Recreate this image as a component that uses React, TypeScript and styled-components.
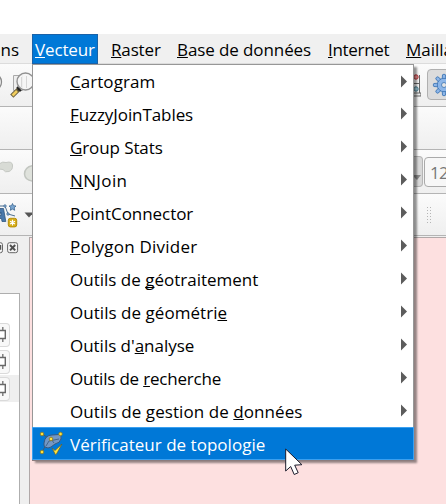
import React from "react";
import styled, { createGlobalStyle } from "styled-components";

const Global = createGlobalStyle`
  * { box-sizing: border-box; }
  body { margin: 0; background: #fff; overflow: hidden; font-family: "Open Sans", "Noto Sans", sans-serif; }
  svg { display: block; flex: none; }
`;

const Window = styled.div`
  position: relative;
  width: 446px;
  height: 504px;
  padding-top: 34px;
  display: flex;
  flex-direction: column;
  overflow: hidden;
  background: #fff;
`;

const MenuBar = styled.nav`
  display: flex;
  flex: none;
  height: 30px;
  background: #f0f0f0;
  border-bottom: 1px solid #dcdcdc;
`;

const MenuTitle = styled.div<{ $width: number; $pad?: number; $tracking?: number; $active?: boolean }>`
  flex: none;
  width: ${(p) => p.$width}px;
  height: 30px;
  padding-left: ${(p) => p.$pad ?? 3}px;
  font-size: 17px;
  line-height: 31px;
  letter-spacing: ${(p) => p.$tracking ?? 0}px;
  white-space: nowrap;
  color: ${(p) => (p.$active ? "#fff" : "#000")};
  background: ${(p) => (p.$active ? "#0078d7" : "transparent")};
  box-shadow: ${(p) => (p.$active ? "inset 0 0 0 1px #1a62a8" : "none")};
`;

const ScrolledTitle = styled(MenuTitle)`
  display: flex;
  justify-content: flex-end;
  padding: 0 13px 0 0;
`;

const Mnemonic = styled.span`
  text-decoration: underline 1px;
  text-underline-offset: 1px;
  text-decoration-skip-ink: none;
`;

const ToolBar = styled.div<{ $height: number }>`
  display: flex;
  justify-content: space-between;
  flex: none;
  height: ${(p) => p.$height}px;
  background: linear-gradient(#fbfbfb, #efefef);
  border-bottom: 1px solid #b4b4b4;
`;

const ToolGroup = styled.div<{ $width: number }>`
  display: flex;
  align-items: center;
  width: ${(p) => p.$width}px;
  overflow: hidden;
`;

const PressedButton = styled.div`
  flex: none;
  display: flex;
  align-items: center;
  width: 36px;
  height: 31px;
  margin: 0 0 1px 6px;
  padding-left: 4px;
  border: 1px solid #b0b0b0;
  border-radius: 4px;
  background: #dcdcdc;
`;

const ComboArrow = styled.div`
  flex: none;
  display: flex;
  align-items: center;
  width: 9px;
  height: 31px;
  margin-bottom: 1px;
  padding-top: 12px;
  border: 1px solid #b5b5b5;
  border-left: 0;
  border-radius: 0 4px 4px 0;
  background: #d8d8d8;
`;

const NumberField = styled.div`
  flex: none;
  width: 46px;
  height: 30px;
  margin-left: 1px;
  padding-left: 5px;
  border: 1px solid #aaa;
  border-radius: 4px;
  background: #f7f7f7;
  color: #777;
  font-size: 17px;
  letter-spacing: -0.6px;
  line-height: 30px;
`;

const Workspace = styled.div`
  display: flex;
  flex: 1;
  min-height: 0;
  background: #efefef;
  padding-top: 1px;
`;

const Dock = styled.aside`
  flex: none;
  width: 29px;
  display: flex;
  flex-direction: column;
`;

const DockHeader = styled.div`
  display: flex;
  align-items: center;
  height: 21px;
  margin-bottom: 35px;
`;

const LayerTree = styled.div`
  flex: 1;
  width: 20px;
  padding-top: 27px;
  border: 1px solid #aeaeae;
  border-width: 1px 1px 0 0;
  background: #fff;
`;

const LayerRow = styled.div<{ $selected?: boolean }>`
  display: flex;
  align-items: center;
  height: 27px;
  background: ${(p) => (p.$selected ? "#efefef" : "#fff")};
`;

const LayerButton = styled.div`
  display: flex;
  align-items: center;
  width: 10px;
  height: 24px;
  border: 1px solid #dadada;
  border-left: 0;
  border-radius: 0 4px 4px 0;
  background: #f8f8f8;
`;

const MapCanvas = styled.main`
  flex: 1;
  border: 1px solid #b0a8a8;
  border-width: 1px 0 0 1px;
  background: #fde0e0;
`;

const Popup = styled.div`
  position: absolute;
  left: 32px;
  top: 64px;
  width: 382px;
  height: 396px;
  background: #fff;
  box-shadow: 0 1px 0 #8b7c7e, 3px 3px 2px rgba(0, 0, 0, 0.42);
`;

const Entry = styled.div<{ $tracking?: number; $active?: boolean }>`
  display: flex;
  align-items: center;
  height: 33px;
  padding: 0 6px 0 ${(p) => (p.$active ? 6 : 37)}px;
  border: solid ${(p) => (p.$active ? "#3ba0f0" : "#979797")};
  border-width: ${(p) => (p.$active ? "1px" : "0 1px")};
  font-size: 17px;
  letter-spacing: ${(p) => p.$tracking ?? 0}px;
  white-space: pre;
  color: ${(p) => (p.$active ? "#fff" : "#000")};
  background: ${(p) => (p.$active ? "#0078d7" : "#fff")};
  &:first-child { border-top: 1px solid #979797; }
`;

const Label = styled.span`
  flex: 1;
  line-height: 24px;
  padding-top: 2px;
`;

const Pointer = styled.svg`
  position: absolute;
  left: 285px;
  top: 448px;
`;

const entries: [string, string, string, number][] = [
  ["", "C", "artogram", 0.05],
  ["", "F", "uzzyJoinTables", -0.08],
  ["", "G", "roup Stats", -0.1],
  ["", "N", "NJoin", 0.38],
  ["", "P", "ointConnector", -0.05],
  ["", "P", "olygon Divider", 0.24],
  ["Outils de ", "g", "éotraitement", 0],
  ["Outils de géométri", "e", "", 0.04],
  ["Outils d'", "a", "nalyse", -0.03],
  ["Outils de ", "r", "echerche", -0.2],
  ["Outils de gestion de ", "d", "onnées", 0.07],
];

const ZoomLayerIcon = () => (
  <svg width="32" height="42" viewBox="0 0 32 42">
    <circle cx="-7" cy="18" r="8.5" fill="#f4f4f4" stroke="#888" strokeWidth="1.3" />
    <path d="M13.5 11.5h9v15h-9z" fill="#eee" stroke="#aaa" />
    <path d="M11.8 32.2l7.4-7.4" stroke="#6b6040" strokeWidth="4.6" />
    <path d="M12.5 31.5l4.5-4.5" stroke="#f1cd5d" strokeWidth="2.6" />
    <path d="M17 23l4 4M18 26l3-3" stroke="#222" strokeWidth="2" />
    <circle cx="25.5" cy="17.5" r="8.5" fill="#f5f5f5" fillOpacity=".9" stroke="#919191" strokeWidth="1.4" />
    <path d="M21.5 13v10M26.5 12v12" fill="none" stroke="#d6d6d6" />
  </svg>
);

const RulerIcon = () => (
  <svg width="7" height="42" viewBox="0 0 7 42">
    <path d="M5.5 11v20M0 19.5h6M0 31h6" stroke="#666" />
    <path d="M0 29h7v3H0" fill="#eee" stroke="#666" />
    <circle cx="2" cy="13" r="2.2" fill="#f19999" stroke="#bc3339" />
    <circle cx="2" cy="25" r="2.2" fill="#a8d2e0" stroke="#487d91" />
  </svg>
);

const GearIcon = () => (
  <svg width="24" height="24" viewBox="-12 -12 24 24">
    <g fill="#8db6e8" stroke="#3f77b5" strokeWidth=".9">
      {[0, 45, 90, 135, 180, 225, 270, 315].map((a) => (
        <path key={a} transform={`rotate(${a})`} d="M-1.8-6L-1.5-10.2Q0-11.4 1.5-10.2L1.8-6" />
      ))}
      <circle r="6.7" />
    </g>
    <circle r="6.1" fill="#8db6e8" />
    <circle r="2.5" fill="#e5e5e5" stroke="#5386be" />
  </svg>
);

const ShapesIcon = () => (
  <svg width="32" height="42" viewBox="0 0 32 42">
    <path d="M-1 13Q3 10 6 11.5Q12 10 12.5 14Q13 19 9 20.5Q5 22 3 18.5L-1 18" fill="#d8dbd5" stroke="#c5c8c3" />
    <path d="M34 14.5Q25 15 24.5 23Q25 30 34 30" fill="#dfe2dc" stroke="#c2c6c0" strokeWidth="1.5" />
  </svg>
);

const LabelIcon = () => (
  <svg width="32" height="42" viewBox="0 0 32 42">
    <path d="M-5 27.5L0 14.5H3.5L5.8 27.5H2L1.5 24.5H-1.5L-2.5 27.5zM-.6 21.5H1.2L.8 18z" fill="#4a78aa" stroke="#2f5780" strokeWidth=".8" />
    <path d="M-1 12H5L8 20L15 22" fill="none" stroke="#4d6f8f" />
    <g fill="#9fc1e2" stroke="#3a648f" strokeWidth=".8"><circle cx="5" cy="12" r="1.2" /><circle cx="8" cy="20" r="1.2" /></g>
    <path d="M12.5 9.5l1 2.2 2.5.3-1.8 1.8.5 2.5-2.2-1.2-2.2 1.2.5-2.5L9 12l2.5-.3z" fill="#7ba7d2" stroke="#3a648f" strokeWidth=".8" />
    <rect x="8.3" y="24.3" width="8.4" height="8.6" rx="2" fill="#d6ad17" stroke="#b68e08" />
    <path d="M12.5 25.8v5.6M10 27.2l5 2.8M15 27.2l-5 2.8" stroke="#fff" strokeWidth="1.2" />
    <path d="M24.5 18.5h9l-4.5 5z" fill="#555" />
  </svg>
);

const DockButtons = () => (
  <svg width="19" height="12" viewBox="0 0 19 12">
    <rect x="-6.5" y=".7" width="9" height="10" rx="2" fill="#f4f4f4" stroke="#666" />
    <path d="M-2 7h2.5V3" fill="none" stroke="#555" strokeWidth="1.5" />
    <rect x="7.6" y=".7" width="10" height="10" rx="2" fill="#f4f4f4" stroke="#666" />
    <path d="M10 3l5.2 5.4M15.2 3L10 8.4" stroke="#505050" strokeWidth="2" />
  </svg>
);

const ChipIcon = () => (
  <svg width="7" height="16" viewBox="0 0 7 16">
    <path d="M0 3.5h5.3v8H0" fill="#fff" stroke="#686868" strokeWidth="1.4" />
    <path d="M2.8 0v3M2.8 12v3" stroke="#777" strokeWidth="1.4" />
  </svg>
);

const GripIcon = () => (
  <svg width="20" height="42" viewBox="0 0 20 42">
    <path d="M13.5 13v17M16.5 13v17" stroke="#b5b5b5" strokeDasharray="1 2" />
  </svg>
);

const SubmenuArrow = () => (
  <svg width="6" height="13" viewBox="0 0 6 13">
    <path d="M0 .5v12l6-6z" fill="#5c5c5c" />
  </svg>
);

const TopologyIcon = () => (
  <svg width="31" height="25" viewBox="0 0 31 25">
    <path d="M3 3l8 5M3 21l4-7M21 3l-9 5" stroke="#435b70" />
    <path d="M5 12Q6 4 13 4L20 3.5Q23 4 22 8Q21 12 16 13L12 16Q9 18 6 16Q4.5 14.5 5 12z" fill="#7397c4" stroke="#37587f" />
    <path d="M7 15l3-5 10-2M12 8l3 4" fill="none" stroke="#45658a" />
    <path d="M13 17l3 2.5L23 13l-5.5 10-1 .8z" fill="#ffe23d" stroke="#665f28" strokeWidth=".7" />
    <g fill="#ffe23d" stroke="#8a7920" strokeWidth=".8">
      <circle cx="3" cy="3" r="1.8" /><circle cx="21.5" cy="3" r="1.8" />
      <circle cx="12" cy="8" r="1.8" /><circle cx="3" cy="21" r="1.8" />
    </g>
  </svg>
);

export default function App() {
  return (
    <Window>
      <Global />
      <MenuBar>
        <ScrolledTitle $width={32}>ons</ScrolledTitle>
        <MenuTitle $width={66} $tracking={-0.15} $active><Mnemonic>V</Mnemonic>ecteur</MenuTitle>
        <MenuTitle $width={66} $pad={13} $tracking={-0.15}><Mnemonic>R</Mnemonic>aster</MenuTitle>
        <MenuTitle $width={151} $pad={13} $tracking={-0.1}><Mnemonic>B</Mnemonic>ase de données</MenuTitle>
        <MenuTitle $width={78} $pad={13} $tracking={-0.3}><Mnemonic>I</Mnemonic>nternet</MenuTitle>
        <MenuTitle $width={90} $pad={13}><Mnemonic>M</Mnemonic>aillage</MenuTitle>
      </MenuBar>

      <ToolBar $height={43}>
        <ToolGroup $width={32}><ZoomLayerIcon /></ToolGroup>
        <ToolGroup $width={32}><RulerIcon /><PressedButton><GearIcon /></PressedButton></ToolGroup>
      </ToolBar>
      <ToolBar $height={43} />
      <ToolBar $height={44}>
        <ToolGroup $width={32}><ShapesIcon /></ToolGroup>
        <ToolGroup $width={32}>
          <ComboArrow><svg width="7" height="5" viewBox="0 0 7 5"><path d="M0 0h7L3 5 0 2z" fill="#888" /></svg></ComboArrow>
          <NumberField>12</NumberField>
        </ToolGroup>
      </ToolBar>
      <ToolBar $height={42}>
        <ToolGroup $width={32}><LabelIcon /></ToolGroup>
        <ToolGroup $width={32}><GripIcon /></ToolGroup>
      </ToolBar>

      <Workspace>
        <Dock>
          <DockHeader><DockButtons /></DockHeader>
          <LayerTree>
            <LayerRow><LayerButton><ChipIcon /></LayerButton></LayerRow>
            <LayerRow><LayerButton><ChipIcon /></LayerButton></LayerRow>
            <LayerRow $selected><LayerButton><ChipIcon /></LayerButton></LayerRow>
          </LayerTree>
        </Dock>
        <MapCanvas />
      </Workspace>

      <Popup>
        {entries.map(([before, key, after, tracking]) => (
          <Entry key={before + key + after} $tracking={tracking}>
            <Label>{before}<Mnemonic>{key}</Mnemonic>{after}</Label>
            <SubmenuArrow />
          </Entry>
        ))}
        <Entry $tracking={0.02} $active>
          <TopologyIcon />
          <Label>Vérificateur de topologie</Label>
        </Entry>
      </Popup>

      <Pointer width="20" height="28" viewBox="0 0 20 28">
        <path d="M.7 1v22l5-4.5 3.5 8 4-1.8-3.5-7.5 7.2-.5z" fill="#fff" stroke="#1b1b2b" strokeWidth="1" />
      </Pointer>
    </Window>
  );
}
